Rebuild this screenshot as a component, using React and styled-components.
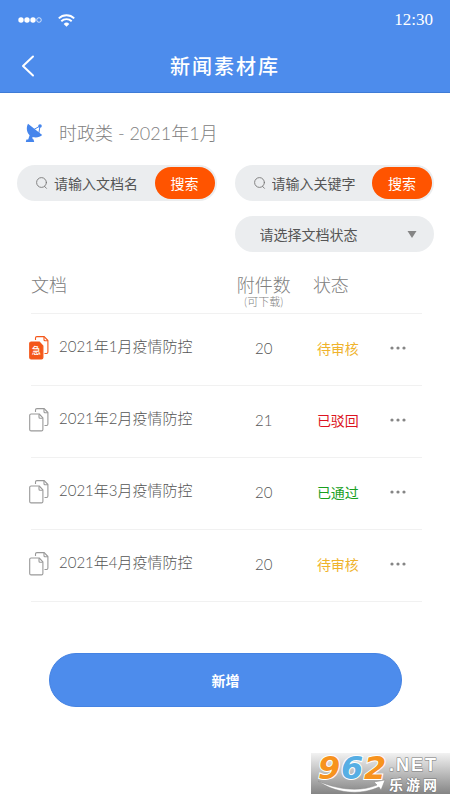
import { useState } from "react";
import styled, { createGlobalStyle, ThemeProvider } from "styled-components";

const theme = {
  blue: "#4d8cec",
  orange: "#ff5400",
  field: "#ebedef",
  text: "#555555",
  muted: "#808080",
  line: "#f1f1f1",
  status: {
    pending: "#efb32c",
    rejected: "#dc1422",
    approved: "#18a01f",
  },
};

const GlobalStyle = createGlobalStyle`
  *, *::before, *::after {
    box-sizing: border-box;
  }

  body {
    margin: 0;
    background: #fff;
    font-family: Lato, "Noto Sans CJK SC", sans-serif;
    font-weight: 300;
  }

  button, input, select {
    margin: 0;
    padding: 0;
    border: 0;
    background: none;
    font: inherit;
    color: inherit;
  }

  button {
    cursor: pointer;
  }
`;

const Page = styled.div`
  display: flex;
  flex-direction: column;
  min-height: 100vh;
`;

const Header = styled.header`
  background: ${({ theme }) => theme.blue};
  border-bottom: 1px solid #3f7bd6;
  color: #fff;
`;

const StatusBar = styled.div`
  display: flex;
  align-items: center;
  gap: 16px;
  height: 40px;
  padding: 0 17px 0 18px;
`;

const Clock = styled.time`
  margin-left: auto;
  font-family: "Liberation Serif", serif;
  font-size: 17px;
  font-weight: 400;
`;

const TitleBar = styled.div`
  display: grid;
  grid-template-columns: 32px 1fr 32px;
  align-items: center;
  height: 52px;
  padding: 0 12px;
`;

const BackButton = styled.button`
  display: flex;
  justify-content: center;
  height: 32px;
  align-items: center;
`;

const Title = styled.h1`
  margin: 0;
  font-size: 20px;
  line-height: 28px;
  font-weight: 500;
  letter-spacing: 2px;
  text-align: center;
`;

const Main = styled.main`
  padding: 24px 16px 0 17px;
`;

const Category = styled.h2`
  display: flex;
  align-items: center;
  gap: 15px;
  margin: 0 0 16px;
  padding-left: 8px;
  color: ${({ theme }) => theme.muted};
  font-size: 18px;
  line-height: 32px;
  font-weight: inherit;
`;

const Filters = styled.div`
  display: grid;
  grid-template-columns: repeat(2, minmax(0, 1fr));
  gap: 15px 18px;
  font-weight: 400;
`;

const Field = styled.form`
  display: flex;
  align-items: center;
  height: 36px;
  padding: 0 2px 0 19px;
  border-radius: 18px;
  background: ${({ theme }) => theme.field};
  color: ${({ theme }) => theme.text};
`;

const SearchInput = styled.input`
  flex: 1;
  min-width: 0;
  margin-left: 6px;
  font-size: 14px;
  outline: none;

  &::placeholder {
    color: inherit;
    opacity: 1;
  }
`;

const SearchButton = styled.button`
  width: 60px;
  height: 32px;
  border-radius: 16px;
  background: ${({ theme }) => theme.orange};
  color: #fff;
  font-size: 14px;
`;

const SelectField = styled.div`
  display: grid;
  grid-column: 2;
  align-items: center;
  border-radius: 18px;
  background: ${({ theme }) => theme.field};
  color: ${({ theme }) => theme.text};

  > * {
    grid-area: 1 / 1;
  }

  svg {
    justify-self: end;
    margin-right: 17px;
    pointer-events: none;
  }
`;

const Select = styled.select`
  width: 100%;
  height: 36px;
  padding: 0 32px 0 25px;
  appearance: none;
  font-size: 14px;
`;

const Table = styled.table`
  width: calc(100% - 26px);
  margin: 16px 12px 0 14px;
  border-collapse: collapse;
  table-layout: fixed;
  color: ${({ theme }) => theme.text};
`;

const HeadCell = styled.th`
  height: 45px;
  padding: 6px 0 0 ${({ $indent }) => $indent || 0}px;
  border-bottom: 1px solid ${({ theme }) => theme.line};
  color: ${({ theme }) => theme.muted};
  font-size: 18px;
  line-height: 22px;
  font-weight: inherit;
  text-align: ${({ $align }) => $align || "left"};
  vertical-align: top;

  small {
    display: block;
    font-size: 11px;
    line-height: 12px;
  }
`;

const Cell = styled.td`
  height: 72px;
  padding: 0 0 2px;
  border-bottom: 1px solid ${({ theme }) => theme.line};
  font-size: 15px;
  text-align: ${({ $align }) => $align || "left"};
`;

const StatusCell = styled(Cell)`
  padding-left: 20px;
  color: ${({ theme, $status }) => theme.status[$status]};
  font-size: 14px;
  font-weight: 400;
`;

const DocName = styled.div`
  display: flex;
  align-items: flex-start;
  gap: 10px;
  margin-left: -2px;
  line-height: 20px;
  white-space: nowrap;
`;

const MoreButton = styled.button`
  display: flex;
  align-items: center;
  height: 24px;
`;

const AddButton = styled.button`
  display: block;
  width: calc(100% - 64px);
  height: 54px;
  margin: 51px 32px 0;
  border: 1px solid #4583e3;
  border-radius: 27px;
  background: ${({ theme }) => theme.blue};
  color: #fff;
  font-size: 14px;
  font-weight: 700;
`;

const SiteMark = styled.footer`
  align-self: flex-end;
  width: 139px;
  height: 41px;
  margin: auto 0 6px;
  background: linear-gradient(#f2f2f2, #858585);

  svg {
    display: block;
    overflow: visible;
  }
`;

const SignalIcon = () => (
  <svg width="24" height="6" viewBox="0 0 24 6" fill="#fff">
    <circle cx="3" cy="3" r="2.7" />
    <circle cx="9" cy="3" r="2.7" />
    <circle cx="15" cy="3" r="2.7" />
    <circle cx="21" cy="3" r="2.3" fill="none" stroke="#fff" strokeWidth="0.7" />
  </svg>
);

const WifiIcon = () => (
  <svg width="17" height="13" viewBox="0 0 17 13" fill="none" stroke="#fff" strokeWidth="1.9">
    <path d="M0.8 4.4a11 11 0 0 1 15.4 0" />
    <path d="M3.3 7.3a7.4 7.4 0 0 1 10.4 0" />
    <path d="M8.5 12.8 5.7 9.9a4 4 0 0 1 5.6 0z" fill="#fff" stroke="none" />
  </svg>
);

const BackIcon = () => (
  <svg width="14" height="22" viewBox="0 0 14 22" fill="none" stroke="#fff" strokeWidth="2" strokeLinecap="round" strokeLinejoin="round">
    <path d="M12 1.5 2 11l10 9.5" />
  </svg>
);

const DishIcon = () => (
  <svg width="19" height="20" viewBox="0 0 19 20" fill="#4585ec">
    <path d="M3 .8C1 4.600 1.600 9.400 4.600 12.200L3.200 16.400H1.400L.8 19h8.400l-.6-2.600-1-.3-.2-2c3.600 1 7.600.4 9.800-2z" />
    <path d="M8 7 15 3 13.800 10.500" fill="none" stroke="#4585ec" strokeWidth="1" />
    <circle cx="15" cy="3" r="1.8" />
  </svg>
);

const SearchIcon = () => (
  <svg width="12" height="12" viewBox="0 0 12 12" fill="none" stroke="#777" strokeWidth="0.9" strokeLinecap="round">
    <circle cx="5.5" cy="5.5" r="4.9" />
    <path d="m8.6 9.4 1.8 1.9" />
  </svg>
);

const CaretIcon = () => (
  <svg width="10" height="7" viewBox="0 0 10 7" fill="#858585">
    <path d="M.5 0h9L5 7z" />
  </svg>
);

const MoreIcon = () => (
  <svg width="16" height="4" viewBox="0 0 16 4" fill="#858585">
    <circle cx="2" cy="2" r="1.6" />
    <circle cx="8" cy="2" r="1.6" />
    <circle cx="14" cy="2" r="1.6" />
  </svg>
);

const DocIcon = ({ urgent }) => (
  <svg width="20" height="24" viewBox="0 0 20 24" fill="none" stroke={urgent ? "#f4571a" : "#999"} strokeWidth="1.1" strokeLinejoin="round">
    <path d="M6.5 4V2A1.4 1.4 0 0 1 7.9.6h7.3l3.7 3.9v11.6a1.4 1.4 0 0 1-1.4 1.4H15.5" />
    <path d="M15 .8v3a1 1 0 0 0 1 1h2.8" />
    <path
      d="M2.1 6h8.1l3.7 3.9v11.6a1.4 1.4 0 0 1-1.4 1.4H2.1A1.4 1.4 0 0 1 .7 21.5V7.4A1.4 1.4 0 0 1 2.1 6z"
      fill={urgent ? "#f4571a" : "#fff"}
    />
    {urgent ? (
      <text x="7.2" y="18" fill="#fff" stroke="none" fontSize="9" fontWeight="500" textAnchor="middle">
        急
      </text>
    ) : (
      <path d="M10 6.2v3a1 1 0 0 0 1 1h2.8" />
    )}
  </svg>
);

const SiteLogo = () => (
  <svg width="139" height="41" viewBox="0 0 139 41" fontFamily="Liberation Sans, sans-serif" fontWeight="700">
    <g fontFamily="DejaVu Sans, sans-serif" fontSize="32" fontStyle="italic" stroke="#fff" strokeWidth="2" paintOrder="stroke">
      <text x="7" y="26" fill="#f7931e">9</text>
      <text x="30" y="26" fill="#56aee4">6</text>
      <text x="53" y="26" fill="#f7931e">2</text>
    </g>
    <path d="M7 28c20 9 42 11 59 4l-3-3 11-2-4 10-2-3c-20 9-44 6-61-6z" fill="#fff" stroke="#888" strokeWidth="0.5" />
    <g fill="#fff" stroke="#777" strokeWidth="1" paintOrder="stroke">
      <text x="78" y="18" fontSize="18" letterSpacing="2">.NET</text>
      <text x="78" y="37" fontSize="14" fontFamily="Noto Sans CJK SC, sans-serif" letterSpacing="3">乐游网</text>
    </g>
  </svg>
);

const documents = [
  { name: "2021年1月疫情防控", count: 20, status: "pending", label: "待审核", urgent: true },
  { name: "2021年2月疫情防控", count: 21, status: "rejected", label: "已驳回" },
  { name: "2021年3月疫情防控", count: 20, status: "approved", label: "已通过" },
  { name: "2021年4月疫情防控", count: 20, status: "pending", label: "待审核" },
];

const SearchField = ({ placeholder }) => {
  const [value, setValue] = useState("");

  return (
    <Field onSubmit={(e) => e.preventDefault()}>
      <SearchIcon />
      <SearchInput aria-label={placeholder} placeholder={placeholder} value={value} onChange={(e) => setValue(e.target.value)} />
      <SearchButton type="submit">搜索</SearchButton>
    </Field>
  );
};

const DocumentTable = () => (
  <Table>
    <colgroup>
      <col width="51%" />
      <col width="17%" />
      <col />
      <col width="32" />
    </colgroup>
    <thead>
      <tr>
        <HeadCell scope="col">文档</HeadCell>
        <HeadCell scope="col" $align="center">
          附件数
          <small>(可下载)</small>
        </HeadCell>
        <HeadCell scope="col" $indent={16}>
          状态
        </HeadCell>
        <HeadCell aria-label="操作" />
      </tr>
    </thead>
    <tbody>
      {documents.map((doc) => (
        <tr key={doc.name}>
          <Cell>
            <DocName>
              <DocIcon urgent={doc.urgent} />
              {doc.name}
            </DocName>
          </Cell>
          <Cell $align="center">{doc.count}</Cell>
          <StatusCell $status={doc.status}>{doc.label}</StatusCell>
          <Cell>
            <MoreButton aria-label="更多">
              <MoreIcon />
            </MoreButton>
          </Cell>
        </tr>
      ))}
    </tbody>
  </Table>
);

const App = () => (
  <ThemeProvider theme={theme}>
    <GlobalStyle />
    <Page>
      <Header>
        <StatusBar>
          <SignalIcon />
          <WifiIcon />
          <Clock>12:30</Clock>
        </StatusBar>
        <TitleBar>
          <BackButton aria-label="返回">
            <BackIcon />
          </BackButton>
          <Title>新闻素材库</Title>
        </TitleBar>
      </Header>
      <Main>
        <Category>
          <DishIcon />
          时政类 - 2021年1月
        </Category>
        <Filters>
          <SearchField placeholder="请输入文档名" />
          <SearchField placeholder="请输入关键字" />
          <SelectField>
            <Select aria-label="文档状态" defaultValue="">
              <option value="">请选择文档状态</option>
              <option value="pending">待审核</option>
              <option value="rejected">已驳回</option>
              <option value="approved">已通过</option>
            </Select>
            <CaretIcon />
          </SelectField>
        </Filters>
        <DocumentTable />
        <AddButton>新增</AddButton>
      </Main>
      <SiteMark>
        <SiteLogo />
      </SiteMark>
    </Page>
  </ThemeProvider>
);

export default App;
